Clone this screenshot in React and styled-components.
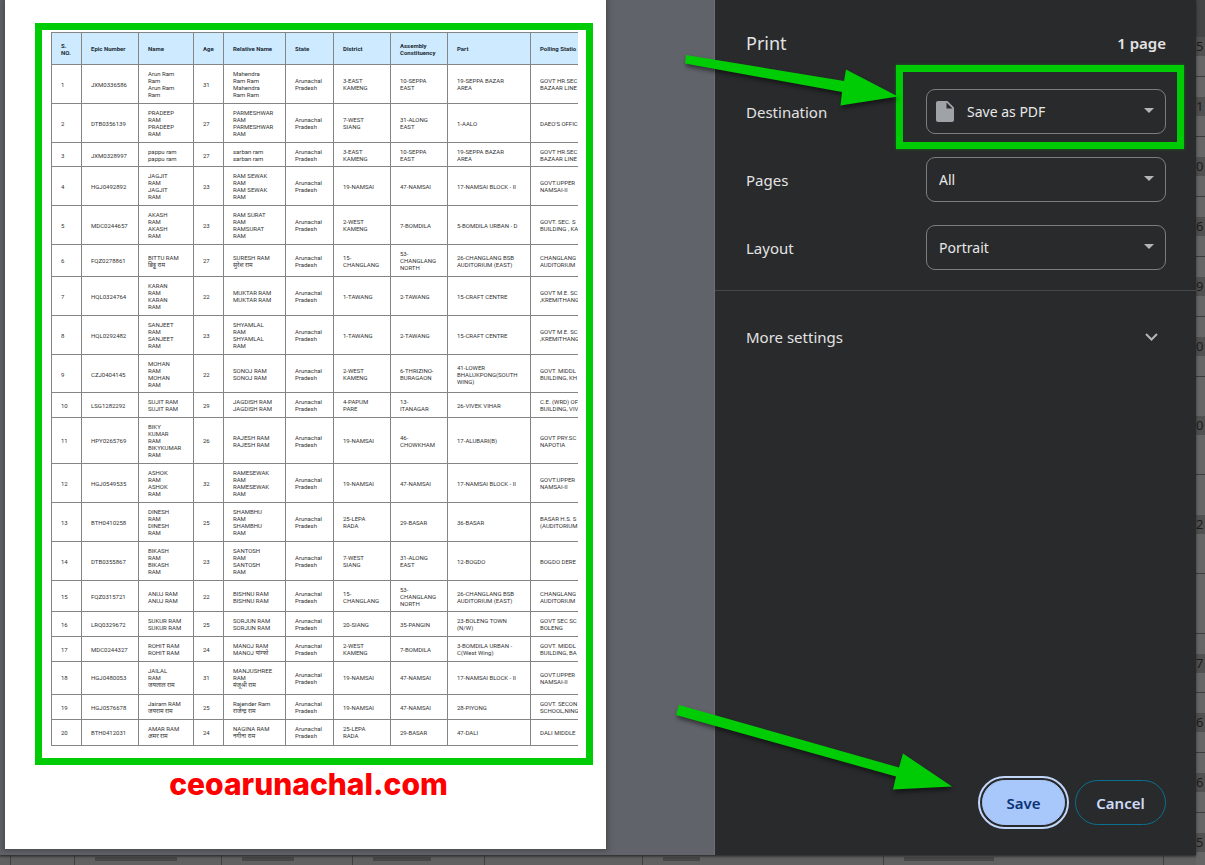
import React from "react";
import styled, { createGlobalStyle, css } from "styled-components";

const GREEN = "#00cc05";

const GlobalStyle = createGlobalStyle`
  *, *::before, *::after { box-sizing: border-box; }
  body {
    margin: 0;
    background: #616161;
    color: #e3e3e3;
    font-family: "Noto Sans", "Open Sans", sans-serif;
  }
`;

const Page = styled.div`
  display: flex;
  min-height: 100vh;
  overflow: hidden;
`;

const Main = styled.div`
  flex: 1;
  min-width: 0;
  display: flex;
  flex-direction: column;
`;

/* Print dialog */

const Dialog = styled.main`
  position: relative;
  flex: 1;
  display: flex;
  box-shadow: 0 1px 3px rgba(0, 0, 0, 0.5);
`;

const Preview = styled.section`
  flex: 1;
  min-width: 0;
  padding: 0 108px 6px 5px;
  overflow: hidden;
  background: #60636a;
  border-right: 1px solid #6b6e74;
`;

const Paper = styled.div`
  height: 100%;
  padding: 23px 13px 0 30px;
  background: #fff;
  box-shadow: 0 0 5px 2px rgba(68, 68, 68, 0.8);
`;

const Frame = styled.div`
  padding: 2px 8px 12px 9px;
  border: 7px solid ${GREEN};
`;

const TableClip = styled.div`
  overflow: hidden;
`;

const Table = styled.table`
  table-layout: fixed;
  width: 600px;
  border-collapse: separate;
  border-spacing: 0;
  border: solid #858585;
  border-width: 1px 0 0 1px;
  font-family: Roboto, "Noto Sans", sans-serif;
  font-size: 6px;
  line-height: 7px;
  color: #333;
`;

const cell = css`
  padding: 5px 9px;
  border: solid #858585;
  border-width: 0 1px 1px 0;
  text-align: left;
  vertical-align: middle;
  white-space: pre;
`;

const HeadCell = styled.th`
  ${cell}
  height: 32px;
  background: #cdeafe;
  color: #1c2b36;
  font-weight: 700;
`;

const rowPadding = { tight: 4, normal: 5, loose: 6 };

const Cell = styled.td`
  ${cell}
  padding-bottom: ${(p) => rowPadding[p.$density]}px;
`;

const SiteName = styled.p`
  margin: 0;
  padding-right: 11px;
  font-family: Inter, sans-serif;
  font-size: 30px;
  line-height: 38px;
  font-weight: 800;
  text-align: center;
  color: #fe0000;
`;

/* Settings panel */

const Panel = styled.section`
  width: 481px;
  flex: none;
  display: flex;
  flex-direction: column;
  background: #292a2c;
`;

const PanelHeader = styled.header`
  display: flex;
  align-items: center;
  justify-content: space-between;
  height: 89px;
  padding: 0 30px 3px 31px;
`;

const Title = styled.h1`
  margin: 0;
  font-size: 18px;
  line-height: 26px;
  font-weight: 400;
`;

const PageCount = styled.span`
  font-size: 15px;
  line-height: 20px;
  font-weight: 600;
`;

const Fields = styled.div`
  display: flex;
  flex-direction: column;
  gap: 23px;
  padding: 0 30px 20px 31px;
  border-bottom: 1px solid #47484a;
`;

const Field = styled.div`
  position: relative;
  display: flex;
  align-items: center;
  justify-content: space-between;
`;

const Label = styled.label`
  font-size: 15px;
  line-height: 20px;
`;

const SelectBox = styled.div`
  display: grid;
  grid-template-columns: 240px;
  align-items: center;
  > * { grid-area: 1 / 1; }
  > svg { pointer-events: none; }
`;

const Select = styled.select`
  appearance: none;
  width: 100%;
  height: 45px;
  padding: 0 32px 0 ${(p) => (p.$icon ? 40 : 12)}px;
  border: 1px solid #7c7d7f;
  border-radius: 9px;
  background: transparent;
  color: #e8e8e8;
  font: inherit;
  font-size: 14px;
  line-height: 20px;
`;

const Caret = styled.svg`
  justify-self: end;
  margin: 0 12px 2px 0;
`;

const DocIcon = styled.svg`
  margin-left: 10px;
`;

const Highlight = styled.div`
  position: absolute;
  inset: -24px -18px -15px auto;
  width: 288px;
  border: 7px solid ${GREEN};
  box-shadow: 0 0 3px rgba(0, 190, 0, 0.5);
  pointer-events: none;
`;

const MoreSettings = styled.button`
  display: flex;
  align-items: center;
  justify-content: space-between;
  height: 92px;
  padding: 0 38px 0 31px;
  border: 0;
  background: transparent;
  color: inherit;
  font: inherit;
  font-size: 15px;
  line-height: 20px;
`;

const Actions = styled.footer`
  display: flex;
  justify-content: flex-end;
  gap: 10px;
  margin-top: auto;
  padding: 0 30px 30px;
`;

const Button = styled.button`
  width: ${(p) => (p.$primary ? 83 : 91)}px;
  height: 45px;
  padding: 0;
  border: 1px solid ${(p) => (p.$primary ? "#a8c7fa" : "#0b6f90")};
  border-radius: 23px;
  outline: ${(p) => (p.$primary ? "2px solid #c3d7fb" : "none")};
  outline-offset: 2px;
  background: ${(p) => (p.$primary ? "#a8c7fa" : "transparent")};
  color: ${(p) => (p.$primary ? "#0b3476" : "#cfdcf8")};
  font: inherit;
  font-size: 15px;
  font-weight: 600;
`;

const Arrow = styled.svg`
  position: absolute;
  top: ${(p) => p.$top}px;
  right: ${(p) => p.$right}px;
  fill: ${GREEN};
  filter: drop-shadow(1px 3px 2px rgba(0, 0, 0, 0.5));
  pointer-events: none;
`;

/* Dimmed sheet behind the dialog */

const BottomStrip = styled.div`
  display: flex;
  height: 10px;
  overflow: hidden;
  background: linear-gradient(#4b4b4b, #616161 3px);
`;

const BottomCell = styled.div`
  flex: none;
  width: ${(p) => p.$width}px;
  border-right: 1px solid #414141;
`;

const Bar = styled.div`
  width: ${(p) => p.$width}px;
  height: 4px;
  margin: 2px 0 0 20px;
  background: #484848;
`;

/* Takes its height from the dialog column; its own rows never stretch the page. */
const SideStrip = styled.div`
  contain: size;
  width: 9px;
  flex: none;
  display: flex;
  flex-direction: column;
  overflow: hidden;
  background: #666;
`;

const SideHead = styled.div`
  flex: none;
  height: 37px;
  background: #454545;
`;

const SideCell = styled.div`
  flex: none;
  display: flex;
  align-items: ${(p) => (p.$top ? "flex-start" : "center")};
  height: ${(p) => p.$height}px;
  border-bottom: 1px solid #3d3d3d;
`;

const SideNumber = styled.span`
  width: 9px;
  background: #515151;
  color: #1d1d1d;
  font-size: 13px;
  line-height: 19px;
`;

const columns = [
  ["S.\nNO.", 30],
  ["Epic Number", 57],
  ["Name", 55],
  ["Age", 30],
  ["Relative Name", 62],
  ["State", 48],
  ["District", 57],
  ["Assembly\nConstituency", 57],
  ["Part", 83],
  ["Polling Statio", 120],
];

const voters = [
  ["JXM0336586", "Arun Ram\nRam\nArun Ram\nRam", "31", "Mahendra\nRam Ram\nMahendra\nRam Ram", "3-EAST\nKAMENG", "10-SEPPA\nEAST", "19-SEPPA BAZAR\nAREA", "GOVT HR.SEC\nBAZAAR LINE"],
  ["DTB0356139", "PRADEEP\nRAM\nPRADEEP\nRAM", "27", "PARMESHWAR\nRAM\nPARMESHWAR\nRAM", "7-WEST\nSIANG", "31-ALONG\nEAST", "1-AALO", "DAEO'S OFFIC"],
  ["JXM0328997", "pappu ram\npappu ram", "27", "sarban ram\nsarban ram", "3-EAST\nKAMENG", "10-SEPPA\nEAST", "19-SEPPA BAZAR\nAREA", "GOVT HR.SEC\nBAZAAR LINE", "tight"],
  ["HGJ0492892", "JAGJIT\nRAM\nJAGJIT\nRAM", "23", "RAM SEWAK\nRAM\nRAM SEWAK\nRAM", "19-NAMSAI", "47-NAMSAI", "17-NAMSAI BLOCK - II", "GOVT.UPPER\nNAMSAI-II"],
  ["MDC0244657", "AKASH\nRAM\nAKASH\nRAM", "23", "RAM SURAT\nRAM\nRAMSURAT\nRAM", "2-WEST\nKAMENG", "7-BOMDILA", "5-BOMDILA URBAN - D", "GOVT. SEC. S\nBUILDING , KA"],
  ["FQZ0278861", "BITTU RAM\nबिट्टू राम", "27", "SURESH RAM\nसुरेश राम", "15-\nCHANGLANG", "53-\nCHANGLANG\nNORTH", "26-CHANGLANG BSB\nAUDITORIUM (EAST)", "CHANGLANG\nAUDITORIUM"],
  ["HQL0324764", "KARAN\nRAM\nKARAN\nRAM", "22", "MUKTAR RAM\nMUKTAR RAM", "1-TAWANG", "2-TAWANG", "15-CRAFT CENTRE", "GOVT M.E. SC\n,KREMITHANG"],
  ["HQL0292482", "SANJEET\nRAM\nSANJEET\nRAM", "23", "SHYAMLAL\nRAM\nSHYAMLAL\nRAM", "1-TAWANG", "2-TAWANG", "15-CRAFT CENTRE", "GOVT M.E. SC\n,KREMITHANG"],
  ["CZJ0404145", "MOHAN\nRAM\nMOHAN\nRAM", "22", "SONOJ RAM\nSONOJ RAM", "2-WEST\nKAMENG", "6-THRIZINO-\nBURAGAON", "41-LOWER\nBHALUKPONG(SOUTH\nWING)", "GOVT. MIDDL\nBUILDING, KH", "tight"],
  ["LSG1282292", "SUJIT RAM\nSUJIT RAM", "29", "JAGDISH RAM\nJAGDISH RAM", "4-PAPUM\nPARE", "13-\nITANAGAR", "26-VIVEK VIHAR", "C.E. (WRD) OF\nBUILDING, VIV"],
  ["HPY0265769", "BIKY\nKUMAR\nRAM\nBIKYKUMAR\nRAM", "26", "RAJESH RAM\nRAJESH RAM", "19-NAMSAI", "46-\nCHOWKHAM", "17-ALUBARI(B)", "GOVT PRY.SC\nNAPOTIA"],
  ["HGJ0549535", "ASHOK\nRAM\nASHOK\nRAM", "32", "RAMESEWAK\nRAM\nRAMESEWAK\nRAM", "19-NAMSAI", "47-NAMSAI", "17-NAMSAI BLOCK - II", "GOVT.UPPER\nNAMSAI-II"],
  ["BTH0410258", "DINESH\nRAM\nDINESH\nRAM", "25", "SHAMBHU\nRAM\nSHAMBHU\nRAM", "25-LEPA\nRADA", "29-BASAR", "36-BASAR", "BASAR H.S. S\n(AUDITORIUM"],
  ["DTB0355867", "BIKASH\nRAM\nBIKASH\nRAM", "23", "SANTOSH\nRAM\nSANTOSH\nRAM", "7-WEST\nSIANG", "31-ALONG\nEAST", "12-BOGDO", "BOGDO DERE"],
  ["FQZ0315721", "ANUJ RAM\nANUJ RAM", "22", "BISHNU RAM\nBISHNU RAM", "15-\nCHANGLANG", "53-\nCHANGLANG\nNORTH", "26-CHANGLANG BSB\nAUDITORIUM (EAST)", "CHANGLANG\nAUDITORIUM", "tight"],
  ["LRQ0329672", "SUKUR RAM\nSUKUR RAM", "25", "SORJUN RAM\nSORJUN RAM", "20-SIANG", "35-PANGIN", "23-BOLENG TOWN\n(N/W)", "GOVT SEC SC\nBOLENG"],
  ["MDC0244327", "ROHIT RAM\nROHIT RAM", "24", "MANOJ RAM\nMANOJ यांग्फो", "2-WEST\nKAMENG", "7-BOMDILA", "3-BOMDILA URBAN -\nC(West Wing)", "GOVT. MIDDL\nBUILDING, BA"],
  ["HGJ0480053", "JAILAL\nRAM\nजयलाल राम", "31", "MANJUSHREE\nRAM\nमंजूश्री राम", "19-NAMSAI", "47-NAMSAI", "17-NAMSAI BLOCK - II", "GOVT.UPPER\nNAMSAI-II", "loose"],
  ["HGJ0576678", "Jairam RAM\nजयराम राम", "25", "Rajender Ram\nराजेन्द्र राम", "19-NAMSAI", "47-NAMSAI", "28-PIYONG", "GOVT. SECON\nSCHOOL,NING"],
  ["BTH0412031", "AMAR RAM\nअमर राम", "24", "NAGINA RAM\nनगीना राम", "25-LEPA\nRADA", "29-BASAR", "47-DALI", "DALI MIDDLE", "loose"],
];

const sideCells = [
  [60, "1"], [60, "0"], [60, "6"], [60, "9"], [60, "0"],
  [98, "0"], [99, "2"], [60, ""], [59, "7"], [60, "6"], [60, "6"], [60, "5"],
];

const bottomCells = [
  [11, 0], [64, 0], [147, 82], [131, 52], [132, 58], [158, 0], [241, 37], [280, 90],
];

function VoterTable() {
  return (
    <Table>
      <colgroup>
        {columns.map(([name, width]) => (
          <col key={name} width={width} />
        ))}
      </colgroup>
      <thead>
        <tr>
          {columns.map(([name]) => (
            <HeadCell key={name} scope="col">{name}</HeadCell>
          ))}
        </tr>
      </thead>
      <tbody>
        {voters.map(([epic, name, age, relative, district, seat, part, station, density = "normal"], i) => (
          <tr key={epic}>
            {[String(i + 1), epic, name, age, relative, "Arunachal\nPradesh", district, seat, part, station].map(
              (text, c) => (
                <Cell key={c} $density={density}>{text}</Cell>
              )
            )}
          </tr>
        ))}
      </tbody>
    </Table>
  );
}

function SelectField({ id, label, value, icon, highlighted }) {
  return (
    <Field>
      <Label htmlFor={id}>{label}</Label>
      <SelectBox>
        <Select id={id} $icon={icon} defaultValue={value}>
          <option>{value}</option>
        </Select>
        {icon && (
          <DocIcon width="18" height="21" viewBox="0 0 18 21" aria-hidden="true">
            <path
              fill="#9fa2a7"
              fillRule="evenodd"
              d="M2 0h9.500L18 6.500V19a2 2 0 0 1-2 2H2a2 2 0 0 1-2-2V2a2 2 0 0 1 2-2zM10.500 1.600V7.500h6z"
            />
          </DocIcon>
        )}
        <Caret width="10" height="5" viewBox="0 0 10 5" aria-hidden="true">
          <path d="M0 0h10L5 5z" fill="#b4b5b7" />
        </Caret>
      </SelectBox>
      {highlighted && <Highlight />}
    </Field>
  );
}

export default function App() {
  return (
    <Page>
      <GlobalStyle />
      <Main>
        <Dialog>
          <Preview aria-label="Preview">
            <Paper>
              <Frame>
                <TableClip>
                  <VoterTable />
                </TableClip>
              </Frame>
              <SiteName>ceoarunachal.com</SiteName>
            </Paper>
          </Preview>
          <Panel aria-label="Print settings">
            <PanelHeader>
              <Title>Print</Title>
              <PageCount>1 page</PageCount>
            </PanelHeader>
            <Fields>
              <SelectField id="destination" label="Destination" value="Save as PDF" icon highlighted />
              <SelectField id="pages" label="Pages" value="All" />
              <SelectField id="layout" label="Layout" value="Portrait" />
            </Fields>
            <MoreSettings type="button" aria-expanded="false">
              More settings
              <svg width="13" height="8" viewBox="0 0 13 8" fill="none" stroke="#b4b5b7" strokeWidth="2" aria-hidden="true">
                <path d="M1 1l5.500 5.500L12 1" />
              </svg>
            </MoreSettings>
            <Actions>
              <Button type="button" $primary>Save</Button>
              <Button type="button">Cancel</Button>
            </Actions>
          </Panel>
          <Arrow $top={55} $right={298} width="213" height="51" viewBox="0 0 213 51" aria-hidden="true">
            <path d="M1 0L159 26L161 14.500L213 41.500L155.500 50.500L157 37L0 8.500z" />
          </Arrow>
          <Arrow $top={704} $right={244} width="276" height="86" viewBox="0 0 276 86" aria-hidden="true">
            <path d="M3 1L223 63.500L227 49.500L276 82.500L217 85.500L220 72.500L0 11z" />
          </Arrow>
        </Dialog>
        <BottomStrip aria-hidden="true">
          {bottomCells.map(([width, bar], i) => (
            <BottomCell key={i} $width={width}>{bar > 0 && <Bar $width={bar} />}</BottomCell>
          ))}
        </BottomStrip>
      </Main>
      <SideStrip aria-hidden="true">
        <SideHead />
        <SideCell $height={40} $top>
          <SideNumber>5</SideNumber>
        </SideCell>
        {sideCells.map(([height, text], i) => (
          <SideCell key={i} $height={height}>{text && <SideNumber>{text}</SideNumber>}</SideCell>
        ))}
      </SideStrip>
    </Page>
  );
}
